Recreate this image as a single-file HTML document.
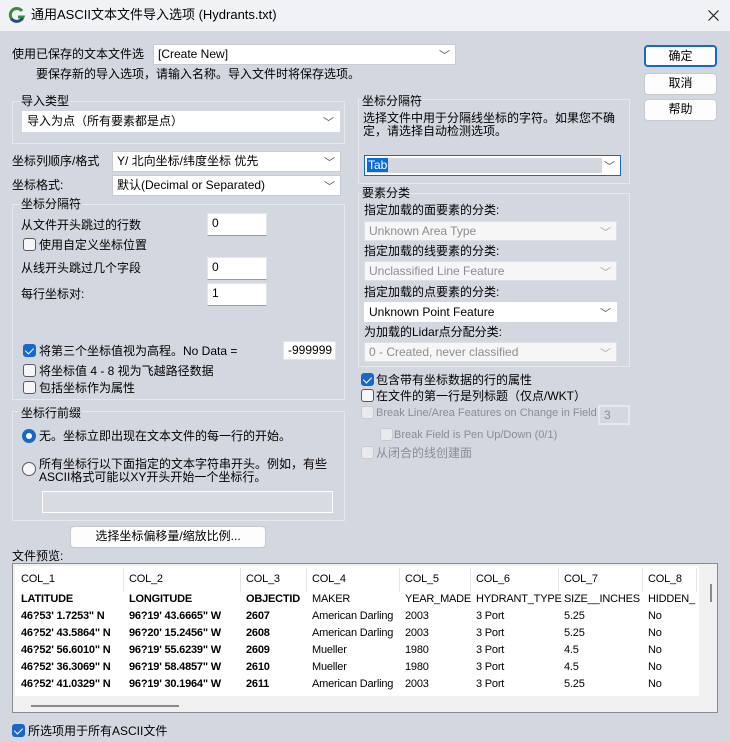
<!DOCTYPE html>
<html><head><meta charset="utf-8"><style>
*{box-sizing:border-box;margin:0;padding:0}
body{width:730px;height:742px;background:#d3d7df;font-family:"Liberation Sans","Noto Sans CJK SC",sans-serif;font-size:12px;color:#000;position:relative;overflow:hidden}
.a{position:absolute;white-space:nowrap;line-height:14px}
.title{position:absolute;left:0;top:0;width:730px;height:31px;background:#f0f2f5}
.cb{position:absolute;background:#fff;border:1px solid #c8ccd2;height:21px;padding-left:4px;line-height:19px}
.cb .ar{position:absolute;right:5px;top:2px;color:#555;font-size:11px}
.cb.dis{background:#f6f6f7;color:#8a8d93;border-color:#dde0e4}
.cb.dis .ar{color:#aaa}
.grp{position:absolute;border:1px solid #e6e8ec}
.gl{position:absolute;background:#d3d7df;padding:0 1px;line-height:14px}
.in{position:absolute;background:#fff;border:1px solid #e3e5e8;border-bottom:1px solid #999;padding-left:4px;line-height:18px}
.chk{position:absolute;width:13px;height:13px;border:1px solid #5a5a5a;border-radius:3px;background:#f6f6f6}
.chk.on{background:#1a66c9;border-color:#1a66c9}
.chk.on:after{content:"";position:absolute;left:3px;top:1px;width:4px;height:7px;border:solid #fff;border-width:0 1.5px 1.5px 0;transform:rotate(45deg)}
.chk.dis{border-color:#c8cacd;background:#e8eaee}
.btn{position:absolute;background:#fdfdfd;border:1px solid #c6c9ce;border-radius:4px;text-align:center;line-height:19px}
.gray{color:#8a8d93}
.tb{position:absolute;left:12px;top:563px;width:706px;height:150px;background:#f0f0f0;border:1px solid #8c8c8c}
.tw{position:absolute;left:2px;top:2px;width:684px;height:130px;background:#fff;font-size:11px;letter-spacing:-0.2px}
.c{position:absolute;line-height:17px;white-space:nowrap}
.b{font-weight:bold}
.sep{position:absolute;top:2px;width:1px;height:24px;background:#e4e4e4}
</style></head><body>
<div class="title"></div>
<svg class="a" style="left:8px;top:6px" width="18" height="18" viewBox="0 0 18 18"><path d="M14 5 A6.5 6.5 0 1 0 15 11 L10 11" fill="none" stroke="#3d8a3a" stroke-width="3"/><path d="M3 13 Q9 18 15 12" fill="none" stroke="#1d4f86" stroke-width="2.5"/></svg>
<div class="a" style="left:31px;top:8px;font-size:13px">通用ASCII文本文件导入选项 (Hydrants.txt)</div>
<svg class="a" style="left:708px;top:10px" width="11" height="11"><path d="M0.5 0.5L10.5 10.5M10.5 0.5L0.5 10.5" stroke="#222" stroke-width="1.2"/></svg>

<div class="a" style="left:12px;top:47px">使用已保存的文本文件选</div>
<div class="cb" style="left:153px;top:44px;width:303px;height:21px">[Create New]<span class="ar">﹀</span></div>
<div class="a" style="left:36px;top:67px">要保存新的导入选项，请输入名称。导入文件时将保存选项。</div>

<div class="grp" style="left:12px;top:101px;width:333px;height:43px"></div>
<div class="gl" style="left:20px;top:94px">导入类型</div>
<div class="cb" style="left:22px;top:111px;width:318px;height:21px;border-color:#fff">导入为点（所有要素都是点）<span class="ar">﹀</span></div>

<div class="a" style="left:12px;top:154px">坐标列顺序/格式</div>
<div class="cb" style="left:112px;top:151px;width:229px;height:21px">Y/ 北向坐标/纬度坐标 优先<span class="ar">﹀</span></div>
<div class="a" style="left:12px;top:178px">坐标格式:</div>
<div class="cb" style="left:112px;top:175px;width:229px;height:21px">默认(Decimal or Separated)<span class="ar">﹀</span></div>

<div class="grp" style="left:12px;top:204px;width:333px;height:196px"></div>
<div class="gl" style="left:20px;top:197px">坐标分隔符</div>
<div class="a" style="left:21px;top:218px">从文件开头跳过的行数</div>
<div class="in" style="left:207px;top:213px;width:60px;height:23px">0</div>
<div class="chk" style="left:23px;top:238px"></div>
<div class="a" style="left:39px;top:238px">使用自定义坐标位置</div>
<div class="a" style="left:21px;top:261px">从线开头跳过几个字段</div>
<div class="in" style="left:207px;top:257px;width:60px;height:23px">0</div>
<div class="a" style="left:21px;top:287px">每行坐标对:</div>
<div class="in" style="left:207px;top:283px;width:60px;height:23px">1</div>
<div class="chk on" style="left:23px;top:344px"></div>
<div class="a" style="left:39px;top:344px">将第三个坐标值视为高程。No Data =</div>
<div class="in" style="left:283px;top:341px;width:53px;height:19px;line-height:16px;border-bottom-color:#e3e5e8">-999999</div>
<div class="chk" style="left:23px;top:364px"></div>
<div class="a" style="left:39px;top:364px">将坐标值 4 - 8 视为飞越路径数据</div>
<div class="chk" style="left:23px;top:381px"></div>
<div class="a" style="left:39px;top:381px">包括坐标作为属性</div>

<div class="grp" style="left:12px;top:411px;width:333px;height:110px"></div>
<div class="gl" style="left:20px;top:406px">坐标行前缀</div>
<div class="a" style="left:22px;top:429px;width:14px;height:14px;border-radius:50%;background:#1a66c9"><div style="position:absolute;left:4px;top:4px;width:6px;height:6px;border-radius:50%;background:#fff"></div></div>
<div class="a" style="left:39px;top:429px">无。坐标立即出现在文本文件的每一行的开始。</div>
<div class="a" style="left:22px;top:462px;width:14px;height:14px;border-radius:50%;border:1px solid #5a5a5a;background:#f6f6f6"></div>
<div class="a" style="left:39px;top:457px">所有坐标行以下面指定的文本字符串开头。例如，有些</div>
<div class="a" style="left:39px;top:470px">ASCII格式可能以XY开头开始一个坐标行。</div>
<div class="in" style="left:42px;top:491px;width:291px;height:22px;border-color:#fff;background:#d8dbe2"></div>

<div class="btn" style="left:70px;top:526px;width:196px;height:22px">选择坐标偏移量/缩放比例...</div>
<div class="a" style="left:12px;top:549px">文件预览:</div>

<div class="tb"><div class="tw">
<div class="sep" style="left:108px"></div><div class="sep" style="left:225px"></div><div class="sep" style="left:291px"></div><div class="sep" style="left:384px"></div><div class="sep" style="left:455px"></div><div class="sep" style="left:543px"></div><div class="sep" style="left:627px"></div><div class="sep" style="left:681px"></div>
<div class="c" style="left:6px;top:5px">COL_1</div><div class="c" style="left:114px;top:5px">COL_2</div><div class="c" style="left:231px;top:5px">COL_3</div><div class="c" style="left:297px;top:5px">COL_4</div><div class="c" style="left:390px;top:5px">COL_5</div><div class="c" style="left:461px;top:5px">COL_6</div><div class="c" style="left:549px;top:5px">COL_7</div><div class="c" style="left:633px;top:5px">COL_8</div>
<div class="c b" style="left:6px;top:25px">LATITUDE<br>46?53' 1.7253" N<br>46?52' 43.5864" N<br>46?52' 56.6010" N<br>46?52' 36.3069" N<br>46?52' 41.0329" N</div>
<div class="c b" style="left:114px;top:25px">LONGITUDE<br>96?19' 43.6665" W<br>96?20' 15.2456" W<br>96?19' 55.6239" W<br>96?19' 58.4857" W<br>96?19' 30.1964" W</div>
<div class="c b" style="left:231px;top:25px">OBJECTID<br>2607<br>2608<br>2609<br>2610<br>2611</div>
<div class="c" style="left:297px;top:25px">MAKER<br>American Darling<br>American Darling<br>Mueller<br>Mueller<br>American Darling</div>
<div class="c" style="left:390px;top:25px">YEAR_MADE<br>2003<br>2003<br>1980<br>1980<br>2003</div>
<div class="c" style="left:461px;top:25px">HYDRANT_TYPE<br>3 Port<br>3 Port<br>3 Port<br>3 Port<br>3 Port</div>
<div class="c" style="left:549px;top:25px">SIZE__INCHES<br>5.25<br>5.25<br>4.5<br>4.5<br>5.25</div>
<div class="c" style="left:633px;top:25px">HIDDEN_<br>No<br>No<br>No<br>No<br>No</div>
</div>
<div style="position:absolute;left:18px;top:141px;width:148px;height:2px;background:#8a8a8a"></div>
<div style="position:absolute;left:697px;top:20px;width:2px;height:18px;background:#8a8a8a"></div>
</div>

<div class="chk on" style="left:12px;top:724px"></div>
<div class="a" style="left:28px;top:724px">所选项用于所有ASCII文件</div>

<div class="btn" style="left:644px;top:45px;width:73px;height:22px;border:2px solid #1a66c9">确定</div>
<div class="btn" style="left:644px;top:73px;width:73px;height:22px">取消</div>
<div class="btn" style="left:644px;top:99px;width:73px;height:22px">帮助</div>

<div class="grp" style="left:358px;top:99px;width:272px;height:85px"></div>
<div class="gl" style="left:361px;top:94px">坐标分隔符</div>
<div class="a" style="left:363px;top:111px">选择文件中用于分隔线坐标的字符。如果您不确</div>
<div class="a" style="left:363px;top:124px">定，请选择自动检测选项。</div>
<div class="cb" style="left:364px;top:155px;width:257px;height:21px;border-color:#1a66c9;padding:2px"><div style="background:#d3d7df;width:235px;height:15px;line-height:15px"><span style="background:#0b6ad6;color:#fff;padding:0 1px">Tab</span></div><span class="ar">﹀</span></div>

<div class="grp" style="left:358px;top:193px;width:272px;height:174px"></div>
<div class="gl" style="left:361px;top:186px">要素分类</div>
<div class="a" style="left:364px;top:203px">指定加载的面要素的分类:</div>
<div class="cb dis" style="left:364px;top:221px;width:253px;height:20px">Unknown Area Type<span class="ar">﹀</span></div>
<div class="a" style="left:364px;top:244px">指定加载的线要素的分类:</div>
<div class="cb dis" style="left:364px;top:261px;width:253px;height:20px">Unclassified Line Feature<span class="ar">﹀</span></div>
<div class="a" style="left:364px;top:285px">指定加载的点要素的分类:</div>
<div class="cb" style="left:364px;top:302px;width:253px;height:20px;border-color:#fff">Unknown Point Feature<span class="ar">﹀</span></div>
<div class="a" style="left:364px;top:325px">为加载的Lidar点分配分类:</div>
<div class="cb dis" style="left:364px;top:342px;width:253px;height:20px">0 - Created, never classified<span class="ar">﹀</span></div>

<div class="chk on" style="left:361px;top:373px"></div>
<div class="a" style="left:376px;top:373px">包含带有坐标数据的行的属性</div>
<div class="chk" style="left:361px;top:389px"></div>
<div class="a" style="left:376px;top:389px">在文件的第一行是列标题（仅点/WKT）</div>
<div class="chk dis" style="left:361px;top:406px"></div>
<div class="a gray" style="left:376px;top:406px;font-size:11px">Break Line/Area Features on Change in Field</div>
<div class="in" style="left:598px;top:405px;width:32px;height:20px;background:#d3d7df;border:2px solid #e6e8ec;color:#8a8d93;line-height:16px">3</div>
<div class="chk dis" style="left:380px;top:428px"></div>
<div class="a gray" style="left:394px;top:428px;font-size:11px">Break Field is Pen Up/Down (0/1)</div>
<div class="chk dis" style="left:361px;top:446px"></div>
<div class="a gray" style="left:376px;top:446px">从闭合的线创建面</div>
</body></html>
